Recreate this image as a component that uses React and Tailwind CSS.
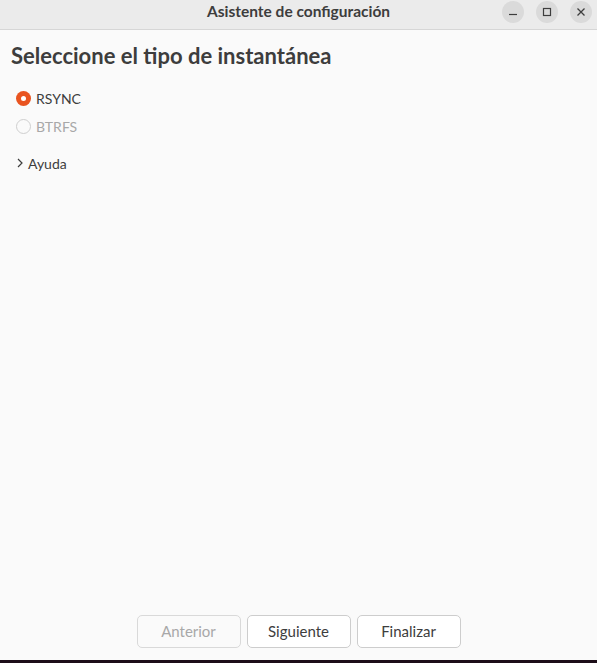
import React, { useState } from 'react';

export default function App() {
  const [mode, setMode] = useState('rsync');

  return (
    <div className="w-[597px] h-[663px] flex flex-col bg-[#fafafa] text-[#3d3d3d] overflow-hidden" style={{ fontFamily: 'Lato, "Noto Sans", sans-serif' }}>
      {/* Title bar */}
      <div className="h-[30px] shrink-0 bg-[#ebebeb] border-b border-[#d6d6d6] flex items-center relative">
        <div className="flex-1 text-center text-[15.5px] font-bold text-[#3d3d3d] pb-[5px]">Asistente de configuración</div>
        <div className="absolute right-[5px] top-[1px] flex gap-[12px]">
          <button className="w-[22px] h-[22px] rounded-full bg-[#dadada] flex items-center justify-center">
            <svg width="10" height="10" viewBox="0 0 10 10"><path d="M1 7.5h8" stroke="#3d3d3d" strokeWidth="1.2" /></svg>
          </button>
          <button className="w-[22px] h-[22px] rounded-full bg-[#dadada] flex items-center justify-center">
            <svg width="10" height="10" viewBox="0 0 10 10"><rect x="1.5" y="1.5" width="7" height="7" fill="none" stroke="#3d3d3d" strokeWidth="1.2" /></svg>
          </button>
          <button className="w-[22px] h-[22px] rounded-full bg-[#dadada] flex items-center justify-center">
            <svg width="10" height="10" viewBox="0 0 10 10"><path d="M1.5 1.5l7 7M8.5 1.5l-7 7" stroke="#3d3d3d" strokeWidth="1.3" /></svg>
          </button>
        </div>
      </div>

      {/* Content */}
      <div className="flex-1 flex flex-col px-[11px] pt-[12px]">
        <h1 className="text-[22px] font-bold leading-[28px] text-[#3d3d3d]">Seleccione el tipo de instantánea</h1>

        <div className="mt-[20px] pl-[5px] flex flex-col gap-[12px]">
          <label className="flex items-center gap-[5px] text-[14px] h-[16px] cursor-pointer" onClick={() => setMode('rsync')}>
            <span className="w-[15px] h-[15px] rounded-full bg-[#e95420] flex items-center justify-center">
              <span className="w-[5px] h-[5px] rounded-full bg-white" />
            </span>
            <span>RSYNC</span>
          </label>
          <label className="flex items-center gap-[5px] text-[14px] h-[16px] text-[#a8a8a8]">
            <span className="w-[15px] h-[15px] rounded-full border border-[#cfcfcf] bg-[#fafafa]" />
            <span>BTRFS</span>
          </label>
        </div>

        <div className="mt-[21px] pl-[5px] flex items-center gap-[4px] text-[14px] h-[16px]">
          <svg width="8" height="10" viewBox="0 0 8 10"><path d="M2 1l4 4-4 4" fill="none" stroke="#3d3d3d" strokeWidth="1.2" /></svg>
          <span>Ayuda</span>
        </div>

        <div className="flex-1" />

        <div className="flex justify-center gap-[6px] mb-[12px]">
          <button className="w-[104px] h-[33px] rounded-[5px] border border-[#d9d9d9] bg-[#fafafa] text-[15px] text-[#a8a8a8]">Anterior</button>
          <button className="w-[104px] h-[33px] rounded-[5px] border border-[#cdcdcd] bg-white text-[15px] text-[#3d3d3d]">Siguiente</button>
          <button className="w-[104px] h-[33px] rounded-[5px] border border-[#cdcdcd] bg-white text-[15px] text-[#3d3d3d]">Finalizar</button>
        </div>
      </div>
      <div className="h-[3px] shrink-0 bg-[#1c0d18]" />
    </div>
  );
}
